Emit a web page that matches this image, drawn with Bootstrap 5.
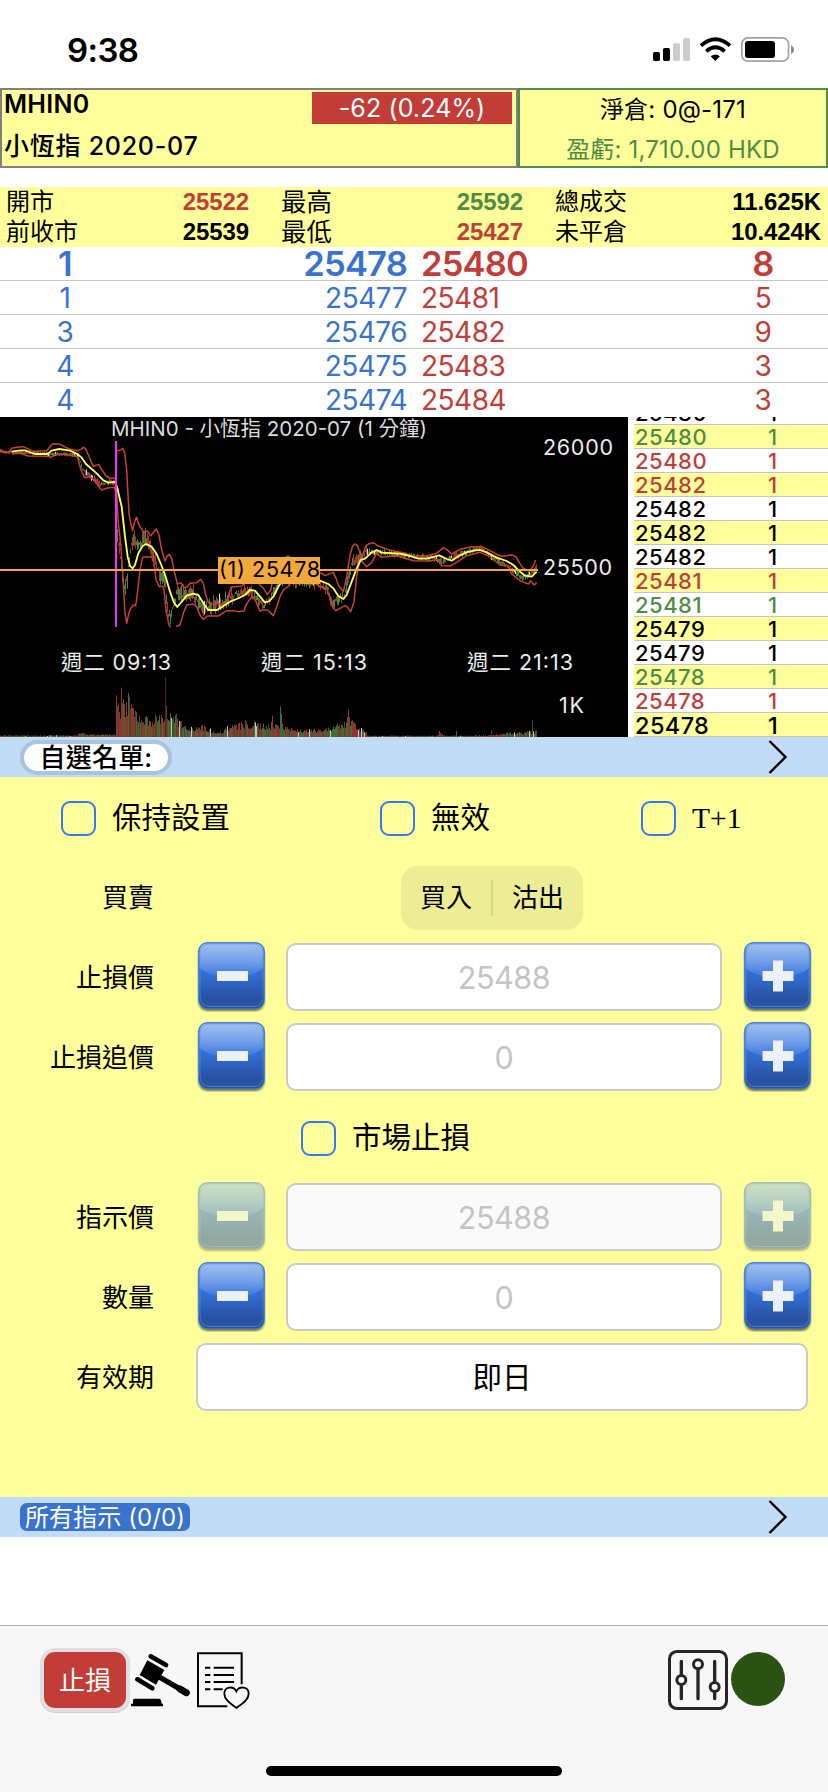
<!DOCTYPE html>
<html lang="zh-Hant">
<head>
<meta charset="utf-8">
<meta name="viewport" content="width=device-width, initial-scale=1">
<title>MHIN0 小恆指</title>
<link href="https://cdn.jsdelivr.net/npm/bootstrap@5.3.0/dist/css/bootstrap.min.css" rel="stylesheet">
<style>
:root{--y:#ffff9c;--sky:#c1dcf7;--up:#4f8d46;--dn:#c23d37;--bid:#3973cd}
html,body{margin:0;background:#fff}
body{width:828px;height:1792px;overflow:hidden;color:#000;font-family:Inter,"Noto Sans CJK TC",sans-serif;line-height:1;white-space:nowrap}
svg{display:block;flex:none}
.up{color:var(--up)}.dn{color:var(--dn)}.bid{color:var(--bid)}
.statusbar{height:88px;padding:35px 32px 0 67px}
.clock{font-size:33px;font-weight:600;line-height:30px;letter-spacing:-.6px}
.quote{width:518px;height:80px;background:var(--y);border:2px solid #808080;padding:2px 4px 0 2px}
.sym{font-size:25px;font-weight:600;line-height:24px;letter-spacing:.3px}
.symname{font-size:25px;font-weight:500;line-height:30px;margin-top:15px;letter-spacing:.75px}
.chg{width:200px;height:32px;background:var(--dn);color:#fff;font-size:25px;line-height:33px;text-align:center;letter-spacing:.1px}
.posn{width:310px;height:80px;background:var(--y);border:2px solid var(--up);font-size:24px;text-align:center;letter-spacing:.2px}
.posn div{line-height:39px;height:39px}
.posn .up{line-height:41px}
.stats{height:60px;margin-top:19px;background:var(--y);display:grid;grid-template-columns:249px 274px 305px;font-size:24px}
.stat{display:flex;justify-content:space-between;align-items:center;height:30px;line-height:30px;padding-left:32px}
.stat.first{padding-left:6px}
.stat.last{padding-right:7px}
.stat.low{line-height:32px}
.stat b{font:bold 24px/30px "Liberation Sans",sans-serif;letter-spacing:-.1px}
.stat.low b{line-height:32px}
.big{font-size:25.5px}
.low .big{line-height:28px}
.bk{display:grid;grid-template-columns:130px 277px 289px 132px;height:34px;line-height:35px;font-size:28px;letter-spacing:-.5px;border-bottom:1px solid #c4c4c6}
.bk:last-child{border:0}
.bk.top{font-size:34.5px;line-height:34px;font-weight:600;letter-spacing:-.8px}
.bk>:nth-child(1),.bk>:nth-child(4){text-align:center}
.bk>:nth-child(2){text-align:right}
.bk>:nth-child(3){padding-left:14px}
.bk>:nth-child(4){padding-left:2px}
.ticks{width:200px;height:320px;overflow:hidden;display:flex;flex-direction:column;justify-content:flex-end}
.tick{flex:none;height:24px;border-bottom:1px solid #c4c4c6;display:grid;grid-template-columns:6px 109px 1fr;font-size:22px;font-weight:500;line-height:25px;letter-spacing:.5px}
.tick i{background:#fff}
.tick:nth-child(even){background:var(--y)}
.tick:last-child{font-size:23.5px;letter-spacing:.4px}
.tick span:nth-child(2){padding-left:1px}
.tick span:nth-child(3){padding-left:25px}
.skybar{height:40px;background:var(--sky);padding:0 39px 0 24px}
.listpill{height:27px;width:144px;background:#fff;border-radius:14px;box-shadow:0 0 0 4px #a9c4e0;font-size:26px;font-weight:500;line-height:28px;text-align:center;letter-spacing:.2px}
.allpill{height:28px;width:170px;margin-left:-4px;background:var(--bid);border-radius:7px;color:#fff;font-size:24px;line-height:30px;text-align:center;letter-spacing:.1px}
.ticket{height:720px;background:var(--y);display:grid;grid-template-rows:repeat(8,80px) 80px}
.line{display:flex;align-items:center}
.cbx{width:35px;height:35px;border:2px solid #3478f6;border-radius:9px;flex:none}
.cbl{font-size:29.5px;line-height:36px;margin-left:16px;margin-right:1px;position:relative;top:-2px}
.lab{width:154px;text-align:right;font-size:26px;line-height:40px;flex:none;padding-top:1px}
.fld{width:436px;height:68px;border:2px solid #c9c9cb;border-radius:10px;background:#fff;text-align:center;font-size:30.5px;line-height:65px;color:#c4c4c6;letter-spacing:-.4px;margin:0 21px}
.fld.off{background:#fafafa}
.fld.day{width:612px;margin:0 0 0 42px;letter-spacing:0;font-size:29.500px}
.seg{width:182px;height:64px;border-radius:17px;background:#eded96;margin:2px 0 0 247px;display:grid;grid-template-columns:1fr 2px 1fr;align-items:center;text-align:center;font-size:26px}
.seg i{height:36px;background:#d6d68c}
.off-btn{opacity:.5}
.toolbar{height:167px;margin-top:88px;border-top:1px solid #b2b2b2;background:#f7f7f7}
.tools{height:60px;margin-top:24px;padding:0 43px 0 44px}
.stop{width:82px;height:56px;border-radius:11px;background:var(--dn);box-shadow:0 0 0 4px #e0e0e0,0 1px 0 4px #d0d0d0;color:#fff;font-size:26px;line-height:57px;text-align:center;margin-top:2px}
.dot{width:54px;height:54px;border-radius:50%;background:#2b5113;margin:2px 0 0 3px}
.home{width:296px;height:10px;border-radius:5px;background:#000;margin:56px auto 0}
</style>
</head>
<body>
<svg width="0" height="0" class="position-absolute">
  <defs>
    <linearGradient id="gb" x1="0" y1="0" x2="0" y2="1"><stop offset="0" stop-color="#3a78dc"/><stop offset=".5" stop-color="#316cd0"/><stop offset=".85" stop-color="#2852a0"/><stop offset="1" stop-color="#2a56a8"/></linearGradient>
    <linearGradient id="gl" x1="0" y1="0" x2="0" y2="1"><stop offset="0" stop-color="#a0c0f0"/><stop offset=".5" stop-color="#75a2e8"/><stop offset="1" stop-color="#3a76de"/></linearGradient>
    <filter id="sh" x="-10%" y="-10%" width="120%" height="125%"><feGaussianBlur stdDeviation="1"/></filter>
    <symbol id="face" viewBox="0 0 69 70">
      <rect x="1.5" y="4" width="66" height="65" rx="9" fill="#3c3c28" opacity=".75" filter="url(#sh)"/>
      <rect x="1" y="0" width="67" height="67" rx="9.5" fill="#4a82d4"/>
      <rect x="2" y="1" width="65" height="65.500" rx="9" fill="url(#gb)"/>
      <path d="M2.500 10Q2.500 1.500 11 1.500H58Q66.500 1.500 66.500 10V26Q56 35 34.500 35T2.500 26Z" fill="url(#gl)"/>
      <rect x="3" y="2" width="63" height="62.500" rx="9" fill="none" stroke="#5d95ea" stroke-width="1" opacity=".6"/>
    </symbol>
    <symbol id="minus" viewBox="0 0 69 70"><use href="#face"/><rect x="20" y="29" width="31" height="10" fill="#ebf1fb"/></symbol>
    <symbol id="plus" viewBox="0 0 69 70"><use href="#face"/><path d="M30 18.500h10v10.500h10.500v10h-10.500v10.500h-10v-10.500h-10.500v-10h10.500z" fill="#ebf1fb"/></symbol>
  </defs>
</svg>

<header class="statusbar d-flex justify-content-between">
  <div class="clock">9:38</div>
  <svg width="145" height="30" viewBox="711 105 435 90">
    <rect x="717" y="156" width="21" height="27" rx="5"/><rect x="747" y="144" width="21" height="39" rx="5"/>
    <rect x="777" y="129" width="21" height="54" rx="5" fill="#ccc"/><rect x="807" y="114" width="21" height="69" rx="5" fill="#ccc"/>
    <g fill="none" stroke="#000" stroke-width="11.500"><path d="M861 137Q904 99 948 137"/><path d="M877 154Q904 130 932 154"/></g>
    <path d="M890 169Q904 158 918 169L904 183Z"/>
    <rect x="983.500" y="113.500" width="140" height="70" rx="18" fill="none" stroke="#a3a3a3" stroke-width="5"/>
    <rect x="993" y="123" width="90" height="51" rx="9"/><path d="M1131 136Q1140 140 1140 149T1131 162Z" fill="#8c8c8c"/>
  </svg>
</header>

<section class="d-flex">
  <div class="quote d-flex justify-content-between">
    <div><div class="sym">MHIN0</div><div class="symname">小恆指 2020-07</div></div>
    <div class="chg">-62 (0.24%)</div>
  </div>
  <div class="posn"><div>淨倉: 0@-171</div><div class="up">盈虧: 1,710.00 HKD</div></div>
</section>

<section class="stats">
  <div class="stat first"><span>開市</span><b class="dn">25522</b></div>
  <div class="stat"><span class="big">最高</span><b class="up">25592</b></div>
  <div class="stat last"><span>總成交</span><b>11.625K</b></div>
  <div class="stat first low"><span>前收市</span><b>25539</b></div>
  <div class="stat low"><span class="big">最低</span><b class="dn">25427</b></div>
  <div class="stat last low"><span>未平倉</span><b>10.424K</b></div>
</section>

<section>
  <div class="bk top"><span class="bid">1</span><span class="bid">25478</span><span class="dn">25480</span><span class="dn">8</span></div>
  <div class="bk"><span class="bid">1</span><span class="bid">25477</span><span class="dn">25481</span><span class="dn">5</span></div>
  <div class="bk"><span class="bid">3</span><span class="bid">25476</span><span class="dn">25482</span><span class="dn">9</span></div>
  <div class="bk"><span class="bid">4</span><span class="bid">25475</span><span class="dn">25483</span><span class="dn">3</span></div>
  <div class="bk"><span class="bid">4</span><span class="bid">25474</span><span class="dn">25484</span><span class="dn">3</span></div>
</section>

<section class="d-flex">
  <svg width="628" height="320" viewBox="0 0 628 320" style="background:#000">
    <g transform="translate(0,-7) scale(.333333)" fill="none" stroke-linejoin="round">
      <g id="vol" stroke-width="3"></g>
      <g id="candles" stroke-width="3"></g>
      <g stroke="#c8403a" stroke-width="4.500">
        <path d="M0 122L8 126L18 129L28 126L35 115L50 112L70 110L100 124L140 122L150 110L158 101L178 102L205 116L232 122L243 118L250 112L256 115L264 132L280 170L296 163L305 178L318 198L328 204L346 205L347 270L350 122L362 120L368 115L374 128L380 180L387 310L392 340L398 362L404 335L410 322L417 345L430 365L442 363L452 378L462 365L469 357L477 375L485 420L495 453L500 440L508 433L515 445L523 485L532 522L543 518L552 533L562 530L570 520L590 518L602 508L610 520L616 550L624 576L632 583L650 580L665 583L680 578L685 560L693 532L725 528L740 515L760 515L775 520L790 535L802 553L812 540L822 490L840 450L865 438L890 460L920 480L960 487L975 497L1000 487L1008 505L1015 525L1030 545L1040 500L1050 435L1058 408L1065 402L1072 406L1080 430L1085 450L1090 430L1096 410L1105 402L1120 398L1135 408L1165 419L1200 427L1240 437L1280 438L1310 430L1330 413L1340 418L1355 432L1380 418L1410 411L1445 410L1475 424L1495 436L1510 439L1535 435L1548 440L1558 458L1570 475L1590 482L1600 468L1607 450"/>
        <path d="M35 132L60 130L85 138L140 139L152 142L172 131L200 134L232 140L243 180L254 203L270 200L285 212L295 228L305 240L322 234L342 232L350 250L355 340L362 400L370 520L375 610L380 640L386 612L392 595L400 585L407 587L412 550L420 480L428 442L455 440L462 460L468 510L478 530L487 528L492 540L498 600L507 645L512 652M528 650L540 645L550 610L560 585L580 582L590 590L600 615L610 628L622 618L655 618L680 602L700 602L715 605L732 603L738 585L755 560L765 568L780 603L790 600L802 600L812 608L820 617L830 590L840 560L850 540L870 525M945 520L960 530L980 535L992 570L1000 594L1008 602L1020 595L1035 587L1043 592L1052 605L1062 575L1070 500L1080 448L1090 460L1100 470L1115 458L1130 430L1145 442L1190 437L1240 452L1290 453L1315 448L1325 467L1350 468L1370 457L1400 437L1440 427L1470 440L1500 465L1525 468L1535 492L1560 512L1585 522L1592 512L1602 525L1610 518"/>
      </g>
      <path stroke="#ffff54" stroke-width="5.500" d="M35 125L60 121L75 121L105 132L142 132L155 122L178 117L210 122L232 132L245 143L258 162L290 190L310 211L325 218L346 216L352 235L365 290L375 380L383 440L390 468L398 475L405 465L415 430L428 408L438 402L455 410L470 432L485 468L497 500L510 545L522 578L532 591L545 575L560 557L580 551L595 555L610 580L625 600L650 600L665 592L690 575L710 567L735 555L750 540L765 542L780 560L795 578L808 573L820 560L830 540L842 518L870 500L930 500L960 512L985 522L1000 535L1015 558L1030 567L1040 555L1055 515L1070 475L1082 450L1095 446L1115 428L1130 420L1145 428L1200 431L1230 438L1255 446L1280 446L1318 436L1340 447L1355 452L1380 436L1400 427L1425 421L1440 420L1460 427L1490 443L1520 453L1540 465L1560 485L1575 497L1595 500L1610 485"/>
      <path d="M348 93V651" stroke="#ea33f7" stroke-width="6"/>
      <path d="M0 480H1614" stroke="#f2a83b" stroke-width="6"/>
    </g>
    <rect x="218" y="140" width="102" height="27" fill="#f2a83b"/>
    <g font-size="21.500" fill="#ececec">
      <text x="111" y="19" font-size="20.500" textLength="316" fill="#dcdcdc">MHIN0 - 小恆指 2020-07 (1 分鐘)</text>
      <text x="543" y="38" textLength="70">26000</text>
      <text x="543" y="158" textLength="69">25500</text>
      <text x="61" y="253" textLength="110">週二 09:13</text>
      <text x="261" y="253" textLength="106">週二 15:13</text>
      <text x="467" y="253" textLength="106">週二 21:13</text>
      <text x="559" y="296" textLength="25">1K</text>
      <text x="219" y="160" textLength="101" fill="#000">(1) 25478</text>
    </g>
  </svg>
  <div class="ticks">
    <div class="tick"><i></i><span>25480</span><span>1</span></div>
    <div class="tick up"><i></i><span>25480</span><span>1</span></div>
    <div class="tick dn"><i></i><span>25480</span><span>1</span></div>
    <div class="tick dn"><i></i><span>25482</span><span>1</span></div>
    <div class="tick"><i></i><span>25482</span><span>1</span></div>
    <div class="tick"><i></i><span>25482</span><span>1</span></div>
    <div class="tick"><i></i><span>25482</span><span>1</span></div>
    <div class="tick dn"><i></i><span>25481</span><span>1</span></div>
    <div class="tick up"><i></i><span>25481</span><span>1</span></div>
    <div class="tick"><i></i><span>25479</span><span>1</span></div>
    <div class="tick"><i></i><span>25479</span><span>1</span></div>
    <div class="tick up"><i></i><span>25478</span><span>1</span></div>
    <div class="tick dn"><i></i><span>25478</span><span>1</span></div>
    <div class="tick"><i></i><span>25478</span><span>1</span></div>
  </div>
</section>

<section class="skybar d-flex align-items-center justify-content-between">
  <div class="listpill">自選名單:</div>
  <svg width="22" height="36" viewBox="0 0 22 36"><path d="M2.500 2L18.500 18L2.500 34" fill="none" stroke="#000" stroke-width="2.400"/></svg>
</section>

<main class="ticket">
  <div class="line" style="padding:3px 0 0 61px">
    <span class="cbx"></span><span class="cbl">保持設置</span>
    <span class="cbx" style="margin-left:149px"></span><span class="cbl">無效</span>
    <span class="cbx" style="margin-left:150px"></span><span class="cbl" style="font-family:'Liberation Serif',serif;top:-1px">T+1</span>
  </div>
  <div class="line"><span class="lab">買賣</span><div class="seg"><span>買入</span><i></i><span>沽出</span></div></div>
  <div class="line"><span class="lab">止損價</span><svg width="69" height="70" style="margin-left:43px"><use href="#minus"/></svg><div class="fld" style="margin-left:20px">25488</div><svg width="69" height="70"><use href="#plus"/></svg></div>
  <div class="line"><span class="lab">止損追價</span><svg width="69" height="70" style="margin-left:43px"><use href="#minus"/></svg><div class="fld" style="margin-left:20px">0</div><svg width="69" height="70"><use href="#plus"/></svg></div>
  <div class="line" style="padding:3px 0 0 301px"><span class="cbx"></span><span class="cbl">市場止損</span></div>
  <div class="line"><span class="lab">指示價</span><svg class="off-btn" width="69" height="70" style="margin-left:43px"><use href="#minus"/></svg><div class="fld off" style="margin-left:20px">25488</div><svg class="off-btn" width="69" height="70"><use href="#plus"/></svg></div>
  <div class="line"><span class="lab">數量</span><svg width="69" height="70" style="margin-left:43px"><use href="#minus"/></svg><div class="fld" style="margin-left:20px">0</div><svg width="69" height="70"><use href="#plus"/></svg></div>
  <div class="line"><span class="lab">有效期</span><div class="fld day text-black">即日</div></div>
</main>

<section class="skybar d-flex align-items-center justify-content-between">
  <div class="allpill">所有指示 (0/0)</div>
  <svg width="22" height="36" viewBox="0 0 22 36"><path d="M2.500 2L18.500 18L2.500 34" fill="none" stroke="#000" stroke-width="2.400"/></svg>
</section>

<footer class="toolbar">
  <div class="tools d-flex">
    <div class="stop">止損</div>
    <svg class="ms-1" width="63" height="60" viewBox="390 510 189 180">
      <g stroke="#000" stroke-linecap="round" fill="none"><path d="M452 529L498 555M412 598L457 625" stroke-width="14"/><path d="M483 594L559 638" stroke-width="16"/><path d="M540 627L559 638" stroke-width="21"/></g>
      <path d="M442 541L493 570L468 614L419 585Z"/><path d="M399 671V661Q399 656 404 656H477Q482 656 483 661L485 671H489V679H393V671Z"/>
    </svg>
    <svg width="60" height="60" viewBox="579 510 180 180">
      <path d="M725 613V519.500H594V678.500H682" fill="none" stroke="#000" stroke-width="6"/>
      <path d="M615 563H631M641 563H702M615 585H631M641 585H702M615 606H631M641 606H702M615 628H631M641 628H668" stroke="#000" stroke-width="6"/>
      <path d="M709 684C692 671 673 659 673 641C673 619 700 617 709 634C718 617 746 619 746 641C746 659 726 671 709 684Z" fill="#f7f7f7" stroke="#000" stroke-width="5.500"/>
    </svg>
    <svg class="ms-auto" width="60" height="60" viewBox="204 510 180 180" fill="none" stroke="#262626">
      <rect x="208.500" y="514.500" width="171" height="171" rx="22" stroke-width="9"/>
      <path d="M244 544V582M244 618V656M294 571V656M344 544V603M344 638V656" stroke-width="10" stroke-linecap="round"/>
      <g stroke-width="9"><circle cx="244" cy="600" r="13.500"/><circle cx="294" cy="553" r="13.500"/><circle cx="344" cy="621" r="13.500"/></g>
    </svg>
    <div class="dot"></div>
  </div>
  <div class="home"></div>
</footer>

<script src="https://cdn.jsdelivr.net/npm/bootstrap@5.3.0/dist/js/bootstrap.bundle.min.js"></script>
<script>
// Repeatable noise for the one-minute candles and volume bars
let seed = 7;
const rnd = () => (seed = (seed * 16807) % 2147483647) / 2147483647;
const lerp = (pts, x) => {
  for (let i = 1; i < pts.length; i++) if (x <= pts[i][0]) {
    const [a, b] = pts[i - 1], [c, d] = pts[i];
    return b + (d - b) * (x - a) / (c - a || 1);
  }
  return pts[pts.length - 1][1];
};
const bar = (x, y1, y2, c) => `<path d="M${x} ${y1.toFixed(1)}V${y2.toFixed(1)}" stroke="${c}"/>`;
const price = [[0,124],[35,126],[150,132],[232,134],[250,180],[300,222],[330,215],[347,216],[352,370],[362,440],[372,530],[382,510],[390,430],[403,380],[418,410],[435,385],[460,430],[480,495],[495,510],[505,615],[513,620],[532,545],[560,550],[575,545],[605,595],[640,590],[680,570],[735,540],[755,550],[790,590],[812,565],[840,510],[960,520],[985,540],[995,580],[1035,555],[1055,460],[1100,425],[1200,432],[1300,445],[1325,455],[1400,425],[1440,415],[1500,455],[1535,475],[1565,505],[1595,490],[1610,470]];
let out = '';
for (let x = 1.5; x < 1612; x += 3) {
  const wild = x > 347 && x < 700 ? 22 : x > 700 && x < 1100 ? 15 : x < 240 ? 4 : 8;
  const y = lerp(price, x) + (rnd() - .5) * wild, h = 2 + rnd() * wild;
  const r = rnd();
  out += bar(x, y - h, y + h, r < .52 ? '#468a3e' : r < .95 ? '#a83530' : '#ddd');
}
document.getElementById('candles').innerHTML = out;
const env = [[0,5],[225,5],[245,13],[275,8],[346,8],[349,80],[365,115],[385,115],[410,78],[440,58],[470,65],[500,75],[530,60],[570,30],[600,38],[640,20],[665,16],[680,32],[735,44],[800,40],[845,44],[880,24],[930,22],[990,28],[1030,44],[1060,50],[1070,28],[1096,24],[1102,4],[1310,4],[1320,12],[1340,4],[1470,6],[1530,14],[1610,18]];
const spikes = {349:126,364:148,385:132,496:180,499:93,529:70,736:52,817:64,841:92,844:70,1042:60,1045:82,1048:60,1318:18,1369:18,1474:22,1597:50};
out = '';
for (let x = 1; x < 1612; x += 3) {
  const h = spikes[x] || lerp(env, x) * (.5 + rnd() * .6), r = rnd();
  out += bar(x + .5, 981 - Math.max(h, 2), 981, x === 496 ? '#5a2320' : r < .42 ? '#3f6f37' : r < .8 ? '#963530' : r < .96 ? '#54452a' : '#c8c8c8');
}
document.getElementById('vol').innerHTML = out;
</script>
</body>
</html>
